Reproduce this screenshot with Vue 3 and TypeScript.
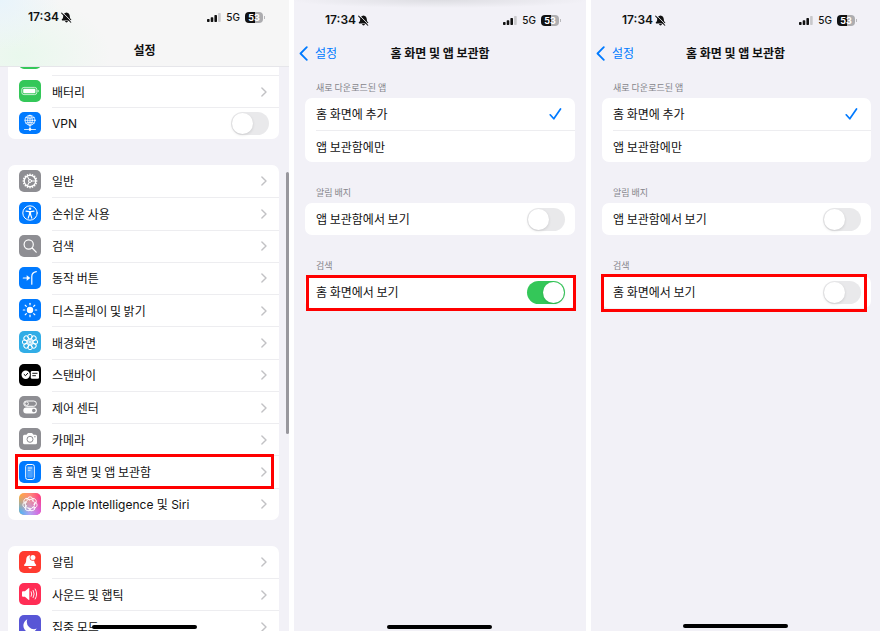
<script setup lang="ts">
import { reactive } from 'vue'

interface Row {
  icon: string
  label: string
  toggle?: boolean
  marked?: boolean
  latin?: boolean
}

interface Phone {
  id: string
  kind: 'list' | 'detail'
  title: string
  placement: string
  badge: boolean
  search: boolean
}

const phones = reactive<Phone[]>([
  { id: 'root', kind: 'list', title: '설정', placement: 'home', badge: false, search: false },
  { id: 'on', kind: 'detail', title: '홈 화면 및 앱 보관함', placement: 'home', badge: false, search: true },
  { id: 'off', kind: 'detail', title: '홈 화면 및 앱 보관함', placement: 'home', badge: false, search: false },
])

const groups: Row[][] = [
  [
    { icon: 'battery', label: '배터리' },
    { icon: 'vpn', label: 'VPN', toggle: true, latin: true },
  ],
  [
    { icon: 'general', label: '일반' },
    { icon: 'access', label: '손쉬운 사용' },
    { icon: 'search', label: '검색' },
    { icon: 'action', label: '동작 버튼' },
    { icon: 'display', label: '디스플레이 및 밝기' },
    { icon: 'wallpaper', label: '배경화면' },
    { icon: 'standby', label: '스탠바이' },
    { icon: 'control', label: '제어 센터' },
    { icon: 'camera', label: '카메라' },
    { icon: 'home', label: '홈 화면 및 앱 보관함', marked: true },
    { icon: 'siri', label: 'Apple Intelligence 및 Siri', latin: true },
  ],
  [
    { icon: 'bell', label: '알림' },
    { icon: 'sound', label: '사운드 및 햅틱' },
    { icon: 'focus', label: '집중 모드' },
  ],
]

const placements = [
  { value: 'home', label: '홈 화면에 추가' },
  { value: 'library', label: '앱 보관함에만' },
]

const spin = (count: number, shape: string): string =>
  Array.from({ length: count }, (_, i) => `<g transform="rotate(${(360 / count) * i} 11 11)">${shape}</g>`).join('')

const tile = (fill: string): string => `<rect width="22" height="22" rx="5" fill="${fill}"/>`
const line = (width: number, body: string): string =>
  `<g fill="none" stroke="#fff" stroke-width="${width}" stroke-linecap="round" stroke-linejoin="round">${body}</g>`

const icons: Record<string, string> = {
  battery:
    tile('#34c759') +
    '<rect x="2.8" y="7.4" width="15" height="7.2" rx="2.2" fill="none" stroke="#fff" stroke-width=".9" opacity=".8"/><rect x="4.2" y="8.8" width="12.2" height="4.4" rx="1" fill="#fff"/><path d="M18.700 9.800q1 .2 1 1.200t-1 1.200z" fill="#fff"/>',
  vpn:
    tile('#007aff') +
    line(
      0.8,
      '<circle cx="11" cy="8.3" r="5"/><ellipse cx="11" cy="8.3" rx="2.3" ry="5"/><path d="M6 8.3h10M6.8 5.6q4.2 1.5 8.4 0M6.8 11q4.2-1.5 8.4 0M11 3.3v13M5.5 17.5h3.8M12.7 17.5h3.8"/><circle cx="11" cy="17.4" r="1.1" fill="#fff"/>',
    ),
  general:
    tile('#8e8e93') +
    line(1.4, '<circle cx="11" cy="11" r="5.8"/>') +
    line(1, '<circle cx="11" cy="11" r="1.5"/>' + spin(3, '<path d="M12.500 11h4"/>')) +
    spin(16, '<rect x="10.4" y="3.6" width="1.2" height="1.7" fill="#fff"/>'),
  access:
    tile('#007aff') +
    line(1, '<circle cx="11" cy="11" r="7.2"/>') +
    '<circle cx="11" cy="6.7" r="1.3" fill="#fff"/>' +
    line(1.2, '<path d="M7 9.1l3.2.6h1.6l3.2-.6M10.5 10v2.3l-1.3 3.8M11.5 10v2.3l1.3 3.8M11 10v2.6"/>'),
  search: tile('#8e8e93') + line(1.2, '<circle cx="9.7" cy="9.5" r="4.600"/><path d="M13.200 13l4 4.200"/>'),
  action:
    tile('#007aff') +
    line(1.2, '<path d="M4.300 11h5"/><path d="M12.800 17.200V9.400q0-3.800 4.500-4.700"/>') +
    '<path d="M7.700 8.200l3.600 2.800-3.600 2.800z" fill="#fff"/>',
  display:
    tile('#007aff') +
    '<circle cx="11" cy="11" r="3.2" fill="#fff"/>' +
    line(1.2, spin(8, '<path d="M11 4.300v1.500"/>')),
  wallpaper:
    tile('#32ade6') +
    line(1, spin(8, '<circle cx="11" cy="5.600" r="2.300"/>') + '<circle cx="11" cy="11" r="2.500"/>') +
    '<circle cx="11" cy="11" r="1.700" fill="#fff" opacity=".8"/>',
  standby:
    tile('#000') +
    '<circle cx="6.700" cy="10.800" r="4.200" fill="#fff"/><path d="M4.800 10.200l1.700 1.500 2.400-2.600" fill="none" stroke="#000" stroke-width="1"/><rect x="11.800" y="7" width="8.200" height="7.800" rx="1.300" fill="#fff"/><path d="M13.300 9.300h5.200M13.300 11.700h3.600" stroke="#000" stroke-width=".9"/>',
  control:
    tile('#8e8e93') +
    '<rect x="4.800" y="5" width="12.600" height="5.300" rx="2.650" fill="none" stroke="#fff" stroke-width="1"/><circle cx="7.600" cy="7.650" r="1.800" fill="none" stroke="#fff" stroke-width=".9"/><rect x="4.300" y="11.500" width="13.600" height="5.900" rx="2.950" fill="#fff"/><circle cx="14.800" cy="14.450" r="1.800" fill="#8e8e93"/>',
  camera:
    tile('#8e8e93') +
    '<path d="M4 8.200q0-1.500 1.500-1.500h2l1-1.300q.3-.4.800-.4h3.400q.5 0 .8.400l1 1.300h2q1.500 0 1.500 1.500v6.600q0 1.500-1.500 1.500h-11Q4 16.300 4 14.800z" fill="#fff"/><circle cx="11" cy="11.300" r="3" fill="none" stroke="#8e8e93" stroke-width="1"/><circle cx="15.900" cy="8.800" r=".7" fill="#8e8e93"/>',
  home:
    tile('#007aff') +
    line(1, '<rect x="6.700" y="3.500" width="8.600" height="15" rx="2"/>') +
    '<rect x="8.200" y="5.200" width="5.600" height="11.600" rx=".8" fill="#fff" opacity=".3"/><path d="M8.900 7h4.200M8.900 9.300h2.600" stroke="#fff" stroke-width=".8"/>',
  siri:
    '<defs><linearGradient id="siri-a" x1="0" y1="0" x2="1" y2="0"><stop offset="0" stop-color="#ffab3d"/><stop offset=".5" stop-color="#ff8a7b"/><stop offset="1" stop-color="#ff3a78"/></linearGradient><linearGradient id="siri-b" x1="0" y1="0" x2="1" y2="0"><stop offset="0" stop-color="#45b3f5"/><stop offset=".5" stop-color="#b4a4f0"/><stop offset="1" stop-color="#d85ee0"/></linearGradient><linearGradient id="siri-f" x1="0" y1="0" x2="0" y2="1"><stop offset=".1" stop-color="#000"/><stop offset=".9" stop-color="#fff"/></linearGradient><mask id="siri-m"><rect width="22" height="22" fill="url(#siri-f)"/></mask></defs>' +
    tile('url(#siri-a)') +
    '<rect width="22" height="22" rx="5" fill="url(#siri-b)" mask="url(#siri-m)"/>' +
    line(0.9, '<circle cx="11" cy="11" r="4.700"/>' + spin(7, '<path d="M8 6.300C8.800 3 13.200 3 14 6.300Q14.200 7.400 13.600 8.200"/>')),
  bell:
    tile('#ff3b30') +
    '<path d="M11.200 4.300C8.300 4.300 7.300 6.500 7.200 9c-.1 2.400-.7 3.400-1.900 4.600-.6.700-.3 1.500.6 1.500h10.400c.9 0 1.200-.8.600-1.500-1-1-1.500-2-1.700-3.800z" fill="#fff"/><path d="M9.300 16h3.600q-.3 1.800-1.800 1.800T9.300 16z" fill="#fff"/><circle cx="13.900" cy="6.500" r="3.200" fill="#ff3b30"/><circle cx="13.900" cy="6.500" r="2.500" fill="#fff"/>',
  sound:
    tile('#ff2d55') +
    '<path d="M3 9.200q0-.9.900-.9h2L9.500 5.200q.8-.6.800.4v10.800q0 1-.8.400L5.900 13.700h-2q-.9 0-.9-.9z" fill="#fff"/>' +
    line(0.9, '<path d="M12.200 8.700q1.200 2.300 0 4.600M14.200 7.400q2 3.600 0 7.200M16.200 6q3 5 0 10"/>'),
  focus: tile('#5856d6') + '<path d="M8.300 4.300a7 7 0 1 0 9.400 9.300A7.300 7.300 0 0 1 8.300 4.300z" fill="#fff"/>',
  green: tile('#34c759'),
}
</script>

<template>
  <main class="board">
    <section v-for="phone in phones" :key="phone.id" class="phone" :class="[phone.kind, phone.id]">
      <header class="top">
        <div class="status">
          <span class="time">17:34</span>
          <svg class="mute" viewBox="0 0 12 12" aria-hidden="true">
            <path d="M6 .5C3.500.8 2.500 2.600 2.400 4.700 2.300 6.600 1.900 7.200 1 8c-.4.500-.1 1.200.4 1.200h9.200c.5 0 .8-.7.400-1.200-.9-.8-1.300-1.400-1.400-3.300C9.500 2.600 8.500.8 6 .5zM4.400 9.900h3.200Q7.400 11.500 6 11.500T4.400 9.900z" fill="#111" />
            <path d="M1.700.5l10 10" stroke="#f4f4f7" stroke-width="1" />
            <path d="M.7 1.200l10 10" stroke="#111" stroke-width="1.100" stroke-linecap="round" />
          </svg>
          <svg class="signal" viewBox="0 0 14 9" aria-hidden="true">
            <rect y="6" width="2.600" height="3" rx=".7" fill="#111" />
            <rect x="3.700" y="4.300" width="2.600" height="4.700" rx=".7" fill="#111" />
            <rect x="7.400" y="2" width="2.600" height="7" rx=".7" fill="#111" />
            <rect x="11.100" width="2.600" height="9" rx=".7" fill="#c8c8cb" />
          </svg>
          <span class="network">5G</span>
          <span class="cell"><span class="charge">53</span></span>
        </div>
        <div class="nav">
          <a v-if="phone.kind === 'detail'" class="back" href="#">
            <svg viewBox="0 0 9 15" aria-hidden="true">
              <path d="M7.800 1.200L1.500 7.500l6.300 6.300" fill="none" stroke="#007aff" stroke-width="1.800" stroke-linecap="round" stroke-linejoin="round" />
            </svg>
            <span class="label">설정</span>
          </a>
          <h1>{{ phone.title }}</h1>
        </div>
      </header>

      <div v-if="phone.kind === 'list'" class="groups">
        <div v-for="(group, g) in groups" :key="g" class="card" :class="{ long: group.length > 4, first: g === 0 }">
          <div v-if="g === 0" class="row peek">
            <svg class="tile" viewBox="0 0 22 22" aria-hidden="true" v-html="icons.green"></svg>
          </div>
          <template v-for="row in group" :key="row.label">
            <label v-if="row.toggle" class="row">
              <svg class="tile" viewBox="0 0 22 22" aria-hidden="true" v-html="icons[row.icon]"></svg>
              <span class="body">
                <span class="label" :class="{ latin: row.latin }">{{ row.label }}</span>
                <input v-model="phone.badge" class="switch" type="checkbox" role="switch" />
              </span>
            </label>
            <a v-else class="row" :class="{ marked: row.marked }" href="#">
              <svg class="tile" viewBox="0 0 22 22" aria-hidden="true" v-html="icons[row.icon]"></svg>
              <span class="body">
                <span class="label" :class="{ latin: row.latin }">{{ row.label }}</span>
                <svg class="chevron" viewBox="0 0 6 10" aria-hidden="true">
                  <path d="M.9.900L5 5 .9 9.100" fill="none" stroke="#c2c2c5" stroke-width="1.400" stroke-linecap="round" stroke-linejoin="round" />
                </svg>
              </span>
            </a>
          </template>
        </div>
        <div class="scrollbar"></div>
      </div>

      <form v-else class="options">
        <h2>새로 다운로드된 앱</h2>
        <div class="card">
          <label v-for="item in placements" :key="item.value" class="row">
            <span class="body">
              <span class="label">{{ item.label }}</span>
              <input v-model="phone.placement" class="choice" type="radio" :name="phone.id + '-placement'" :value="item.value" />
              <svg class="check" viewBox="0 0 13 12" aria-hidden="true">
                <path d="M1.200 6.800l3.600 4L11.500 1" fill="none" stroke="#007aff" stroke-width="1.700" stroke-linecap="round" stroke-linejoin="round" />
              </svg>
            </span>
          </label>
        </div>
        <h2>알림 배지</h2>
        <div class="card">
          <label class="row">
            <span class="body">
              <span class="label">앱 보관함에서 보기</span>
              <input v-model="phone.badge" class="switch" type="checkbox" role="switch" />
            </span>
          </label>
        </div>
        <h2>검색</h2>
        <div class="card">
          <label class="row marked">
            <span class="body">
              <span class="label">홈 화면에서 보기</span>
              <input v-model="phone.search" class="switch" type="checkbox" role="switch" />
            </span>
          </label>
        </div>
      </form>
      <div class="indicator"></div>
    </section>
  </main>
</template>

<style>
body {
  margin: 0;
  background: #fff;
}
</style>

<style scoped>
* {
  box-sizing: border-box;
}
.board {
  display: grid;
  grid-template-columns: 289fr 292fr 289fr;
  gap: 5px;
  height: 100vh;
  overflow: hidden;
  font-family: "Noto Sans CJK KR", sans-serif;
  font-size: 12px;
  line-height: 16px;
  color: #111;
}
.phone {
  position: relative;
  min-width: 0;
  overflow: hidden;
  background: #f2f1f7;
}
.list .top {
  height: 67px;
  padding-top: 9px;
  border-bottom: 1px solid #e6e6ea;
  background:
    radial-gradient(ellipse 60px 50px at 0 0, #e8f4fb, transparent),
    radial-gradient(ellipse 90px 60px at 20px 56px, #e9f8ed, transparent),
    #f6f6f6;
}
.detail .top {
  padding-top: 12px;
}
.on .top {
  background: radial-gradient(ellipse 150px 8px at 50% 0, #dddde2, transparent);
}
.status {
  display: flex;
  align-items: center;
  height: 16px;
  padding: 0 25px 0 31px;
  font-family: Inter, sans-serif;
}
.list .status {
  padding: 0 24px 0 28px;
}
.off .status {
  padding-right: 23px;
}
.time {
  font-size: 12px;
  font-weight: 600;
}
.mute {
  width: 11px;
  height: 11px;
  margin-left: 2px;
}
.signal {
  width: 14px;
  height: 9px;
  margin-left: auto;
}
.network {
  margin: 0 5px;
  font-size: 10px;
  font-weight: 500;
}
.cell {
  position: relative;
  width: 20px;
}
.cell::after {
  content: "";
  position: absolute;
  top: 4px;
  right: 0;
  width: 1px;
  height: 3px;
  background: #b8b8bb;
}
.charge {
  display: block;
  width: 18px;
  height: 11px;
  border-radius: 4px;
  background: linear-gradient(90deg, #111 55%, #adadb0 55%);
  color: #fff;
  font-size: 9px;
  font-weight: 700;
  line-height: 11px;
  text-align: center;
}
.nav {
  display: flex;
  align-items: center;
  justify-content: center;
  position: relative;
  height: 20px;
  margin-top: 15px;
}
h1 {
  margin: 0;
  font-size: 12px;
  font-weight: 700;
}
.back {
  display: flex;
  align-items: center;
  gap: 7px;
  position: absolute;
  left: 5px;
  color: #007aff;
  text-decoration: none;
}
.back svg {
  width: 9px;
  height: 15px;
}
.groups {
  display: flex;
  flex-direction: column;
  gap: 26px;
  padding: 0 10px 0 8px;
}
.card {
  display: grid;
  grid-auto-rows: minmax(32px, 1fr);
  border-radius: 7px;
  background: #fff;
}
.card.long {
  min-height: 355px;
}
.card.first {
  display: block;
  border-radius: 0 0 7px 7px;
}
.row {
  display: flex;
  align-items: stretch;
  position: relative;
  height: 100%;
  min-height: 32px;
  padding-left: 11px;
  color: inherit;
  text-decoration: none;
}
.row.peek {
  align-items: flex-end;
  height: 8px;
  min-height: 0;
  padding-bottom: 6px;
  overflow: hidden;
}
.tile {
  flex: none;
  align-self: center;
  width: 22px;
  height: 22px;
  margin-right: 11px;
}
.peek .tile {
  align-self: flex-end;
}
.body {
  display: flex;
  flex: 1;
  align-items: center;
  justify-content: space-between;
  min-width: 0;
  padding-right: 10px;
}
.row + .row .body {
  border-top: 1px solid #ededf0;
}
.label {
  white-space: nowrap;
}
.latin {
  padding-top: 1px;
  font-family: Inter, "Noto Sans CJK KR", sans-serif;
}
.chevron {
  width: 6px;
  height: 10px;
  margin-right: 2px;
}
.switch {
  flex: none;
  appearance: none;
  width: 38px;
  height: 23px;
  margin: 0;
  padding: 1px;
  border-radius: 12px;
  background: #e9e9eb;
}
.switch::before {
  content: "";
  display: block;
  width: 21px;
  height: 21px;
  border-radius: 50%;
  background: #fff;
  box-shadow: 0 1px 3px #0002;
}
.switch:checked {
  padding-left: 16px;
  background: #34c759;
}
.choice {
  appearance: none;
  width: 0;
  height: 0;
  margin: 0 0 0 auto;
}
.check {
  width: 13px;
  height: 12px;
  margin-right: 3px;
  visibility: hidden;
}
.choice:checked + .check {
  visibility: visible;
}
.options {
  padding: 0 11px;
}
.off .options {
  padding-right: 9px;
}
h2 {
  margin: 24px 0 0;
  padding: 0 11px 4px;
  font-size: 9px;
  font-weight: 400;
  line-height: 13px;
  color: #85858b;
}
.top + .options h2:first-child {
  margin-top: 18px;
}
.marked::after {
  content: "";
  position: absolute;
  z-index: 1;
  inset: -1px 5px -1px 7px;
  border: 3px solid #f00;
}
.on .marked::after {
  inset: -1px -1px -3px 1px;
}
.off .marked::after {
  inset: -2px 4px -4px -1px;
}
.scrollbar {
  position: absolute;
  top: 172px;
  right: 0;
  width: 3px;
  height: 262px;
  border-radius: 2px;
  background: #98979d;
}
.indicator {
  position: absolute;
  z-index: 2;
  bottom: 2px;
  left: 50%;
  width: 105px;
  height: 4px;
  margin-left: -53px;
  border-radius: 2px;
  background: #000;
}
.off .indicator {
  bottom: 3px;
}
</style>
